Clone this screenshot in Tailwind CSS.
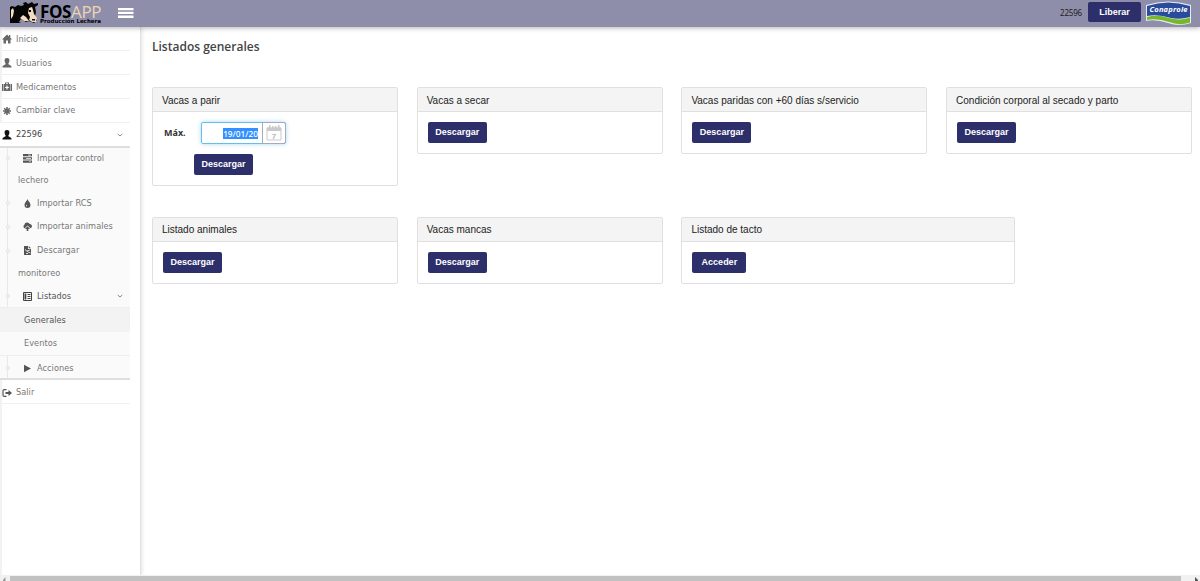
<!DOCTYPE html>
<html lang="es">
<head>
  <meta charset="UTF-8" />
  <meta name="viewport" content="width=device-width, initial-scale=1" />
  <title>FOSAPP - Listados generales</title>
  <script src="https://cdn.jsdelivr.net/npm/@tailwindcss/browser@4"></script>
</head>
<body class="flex h-[581px] flex-col overflow-hidden bg-white font-['Liberation_Sans',sans-serif]">

  <!-- Barra superior -->
  <header class="relative z-10 flex h-[27px] shrink-0 items-start bg-[#8e8eaa] shadow-[0_1px_5px_rgba(0,0,0,0.3)]">
    <div class="flex w-[118px] pl-[10px]">
      <svg class="mt-[2px] h-[22px] w-[29px] shrink-0" viewBox="0 0 29 22">
        <path fill="#050505" d="M0 5 2 4 5 5 8 3 11 4 14 3 13 1 16 0 18 2 22 0 24 2 28 1 28 3 25 5 26 10 25 14 27 18 24 21 19 19 16 20 11 17 9 20 11 21 0 21z"/>
        <path fill="#f3dcc0" d="M1 8 3 6 4 9 3 14 1 17zM10 16 13 13 16 15 19 19 14 19zM19 6 22 5 23 8 24 12 27 16 26 20 22 20 19 18 20 15 18 11z"/>
        <path fill="#050505" d="M19 8h2v2h-2zM22 17h3v1.500h-3z"/>
      </svg>
      <div class="flex flex-col whitespace-nowrap pt-[5px] pl-[1px]">
        <span class="h-[13px] text-[17px] leading-[14px] tracking-[-0.4px] text-[#ecd3b4] font-['Open_Sans',sans-serif]"><b class="font-bold text-black">FOS</b>APP</span>
        <span class="text-[5.500px] leading-[6px] font-bold text-black font-['DejaVu_Sans',sans-serif]">Producción Lechera</span>
      </div>
    </div>
    <svg class="mt-[8px] h-[10px] w-[16px]" viewBox="0 0 16 10" fill="#fff"><path d="M0 0h15.500v2.300H0zM0 3.800h15.500v2.300H0zM0 7.600h15.500v2.300H0z"/></svg>
    <div class="ml-auto flex items-start pr-[8px]">
      <span class="mt-[7px] mr-[6px] text-[8px] leading-[11px] tracking-[-0.2px] text-[#222] font-['Noto_Sans',sans-serif]">22596</span>
      <button class="mt-[2px] mr-[4px] h-[20px] w-[53px] rounded-[2px] bg-[#2d2f6b] pt-px text-[9px] font-bold text-white">Liberar</button>
      <svg class="mt-[1px] h-[25px] w-[47px]" viewBox="0 0 47 25">
        <path fill="#e8edf2" d="M1 4Q23-3 46 4V22Q34 26 23 22 11 18 1 20z"/>
        <path fill="#2a4a9c" d="M2 5Q23-2 45 5V16Q35 19 26 17 13 13 2 15z"/>
        <path fill="#76b82a" d="M2 16Q13 13 24 17 35 20 45 16.500V21.500Q34 25 24 21 12 17 2 19z"/>
        <text x="23.500" y="11.300" text-anchor="middle" textLength="38" fill="#fff" font-family="Open Sans, sans-serif" font-size="7.500" font-weight="700" font-style="italic">Conaprole</text>
      </svg>
    </div>
  </header>

  <div class="flex min-h-0 flex-1">
    <!-- Menú lateral -->
    <nav class="w-[141px] shrink-0 border-r border-[#e3e3e3] text-[8.200px] text-[#777] shadow-[1px_0_4px_rgba(0,0,0,0.12)] font-['DejaVu_Sans',sans-serif] tracking-[0.040px]">
      <div class="border-l-2 border-[#f2f2f2]">
        <a class="flex h-[24px] w-[128px] items-center border-b border-[#f0f0f0] pt-[1px]">
          <svg class="mr-[4px] h-[10px] w-[10px]" viewBox="0 0 10 10" fill="#666"><path d="M5 .5 0 5.500h1.500V9.500H4V6.500h2v3h2.500v-4H10L8.300 3.800V1H7v1.500z"/></svg>Inicio
        </a>
        <a class="flex h-[24px] w-[128px] items-center border-b border-[#f0f0f0] pt-[1px]">
          <svg class="mr-[4px] h-[10px] w-[10px]" viewBox="0 0 10 10" fill="#666"><path d="M5 0c2 0 2.600 1.300 2.400 3C7.200 4.500 6.500 5 6.300 6c.2 1 3.200 1 3.200 3v.5H.5V9c0-2 3-2 3.200-3-.2-1-.9-1.500-1.100-3C2.400 1.300 3 0 5 0z"/></svg>Usuarios
        </a>
        <a class="flex h-[24px] w-[128px] items-center border-b border-[#f0f0f0] pt-[1px]">
          <svg class="mr-[4px] h-[10px] w-[10px]" viewBox="0 0 10 10" fill="#666"><path fill-rule="evenodd" d="M0 2h1.200v7H0zM8.800 2H10v7H8.800zM1.700 2H3V.500h4V2h1.300v7H1.700zM4 2h2v-.7H4zM4.400 3.600v1.300H3.100v1.200h1.300v1.300h1.200V6.100h1.300V4.900H5.600V3.600z"/></svg>Medicamentos
        </a>
        <a class="flex h-[24px] w-[128px] items-center border-b border-[#f0f0f0]">
          <svg class="mr-[4px] h-[10px] w-[10px]" viewBox="0 0 10 10" stroke="#666" stroke-width="1.600"><path d="M5 1v8M1 5h8M2.200 2.200l5.600 5.600M7.800 2.200 2.200 7.800"/></svg>Cambiar clave
        </a>
      </div>
      <a class="flex h-[25px] w-[130px] items-center border-b-2 border-[#dedede] pl-[2px] text-[#444]">
        <svg class="mr-[4px] h-[10px] w-[10px]" viewBox="0 0 10 10" fill="#111"><path d="M5 0c2 0 2.600 1.300 2.400 3C7.200 4.500 6.500 5 6.300 6c.2 1 3.200 1 3.200 3v.5H.5V9c0-2 3-2 3.200-3-.2-1-.9-1.500-1.100-3C2.400 1.300 3 0 5 0z"/></svg>22596
        <svg class="mr-[7px] ml-auto h-[6px] w-[6px]" viewBox="0 0 6 6" fill="none" stroke="#888"><path d="m.7 2 2.300 2L5.300 2"/></svg>
      </a>

      <div class="w-[130px] border-b-2 border-[#dedede] bg-[#fafafa]">
        <div class="ml-[7px] border-l border-[#e9e9e9]">
          <a class="flex h-[44px] flex-col">
            <span class="flex h-[20px] items-center">
              <i class="-ml-[2px] mr-[13px] size-[4px] rounded-full border border-[#e0e0e0] bg-white"></i>
              <svg class="mr-[5px] h-[9px] w-[9px]" viewBox="0 0 9 9" fill="#555"><path fill-rule="evenodd" d="M0 0h9v2.200H0zM5 .8v.6h3V.8zM0 3.300h9v2.200H0zM3 4.100v.6h5v-.6zM0 6.600h9v2.200H0zM6 7.400V8h2v-.6z"/></svg>Importar control
            </span>
            <span class="flex h-[24px] items-center pl-[10px]">lechero</span>
          </a>
          <a class="flex h-[22px] items-center">
            <i class="-ml-[2px] mr-[13px] size-[4px] rounded-full border border-[#e0e0e0] bg-white"></i>
            <svg class="mr-[5px] h-[9px] w-[9px]" viewBox="0 0 9 9" fill="#555"><path fill-rule="evenodd" d="M4.500 0C5 2 7.500 3.600 7.500 6a3 3 0 0 1-6 0C1.500 3.600 4 2 4.500 0zM3.400 5.500c-.8 1-.4 2 .7 2z"/></svg>Importar RCS
          </a>
          <a class="flex h-[25px] items-center">
            <i class="-ml-[2px] mr-[13px] size-[4px] rounded-full border border-[#e0e0e0] bg-white"></i>
            <svg class="mr-[5px] h-[9px] w-[9px]" viewBox="0 0 9 9" fill="#555"><path d="M1.800 6.300A1.900 1.900 0 0 1 1.300 2.900 2.900 2.900 0 0 1 6.700 2 2.200 2.200 0 0 1 7.400 6.300L4.500 3.500zM4.500 4.300 7 6.900H5.300V9H3.700V6.900H2z"/></svg>Importar animales
          </a>
          <a class="flex h-[46px] flex-col">
            <span class="flex h-[23px] items-center">
              <i class="-ml-[2px] mr-[13px] size-[4px] rounded-full border border-[#e0e0e0] bg-white"></i>
              <svg class="mr-[5px] h-[9px] w-[9px]" viewBox="0 0 9 9"><path fill="#555" d="M1 0h4v3h3v6H1zM5.700 0 8 2.300H5.700z"/><path fill="none" stroke="#fafafa" stroke-width=".8" d="M2 3.500 5 6l2.500 1M3 7.500h2M4 5l3-1"/></svg>Descargar
            </span>
            <span class="flex h-[23px] items-center pl-[10px]">monitoreo</span>
          </a>
          <a class="flex h-[22px] items-center text-[#555]">
            <i class="-ml-[2px] mr-[13px] size-[4px] rounded-full border border-[#e0e0e0] bg-white"></i>
            <svg class="mr-[5px] h-[9px] w-[9px]" viewBox="0 0 9 9"><path fill="none" stroke="#444" d="M.5.500h8v8h-8z"/><path fill="#444" d="M1.500 1.500h1.800v6H1.500zM4.500 2h3v1h-3zM4.500 4h3v1h-3zM4.500 6h3v1h-3z"/></svg>Listados
            <svg class="mr-[7px] ml-auto h-[6px] w-[6px]" viewBox="0 0 6 6" fill="none" stroke="#888"><path d="m.7 2 2.300 2L5.300 2"/></svg>
          </a>
        </div>
        <a class="flex h-[25px] items-center border-t border-[#eee] bg-[#f3f3f3] pl-[24px] text-[#555]">Generales</a>
        <a class="flex h-[24px] items-center border-b border-[#eee] pl-[24px]">Eventos</a>
        <a class="ml-[7px] flex h-[22px] items-center border-l border-[#e9e9e9] pt-[2px]">
          <i class="-ml-[2px] mr-[13px] size-[4px] rounded-full border border-[#e0e0e0] bg-white"></i>
          <svg class="mr-[5px] h-[9px] w-[9px]" viewBox="0 0 9 9" fill="#555"><path d="M1 .8 8 4.500 1 8.200z"/></svg>Acciones
        </a>
      </div>

      <div class="h-[195px] border-l-2 border-[#f2f2f2]">
        <a class="flex h-[24px] w-[128px] items-center border-b border-[#f0f0f0] pt-[2px]">
          <svg class="mr-[4px] h-[10px] w-[10px]" viewBox="0 0 10 10"><path fill="none" stroke="#555" stroke-width="1.200" d="M4.500 1.600H2.200Q1 1.600 1 3v4q0 1.400 1.200 1.400h2.300"/><path fill="#555" d="M3.500 4h3V2L10 5 6.500 8V6h-3z"/></svg>Salir
        </a>
      </div>
    </nav>

    <!-- Contenido -->
    <main class="flex-1 pl-[11px]">
      <h1 class="mt-[12px] text-[12px] leading-[16px] font-semibold text-[#444] font-['Open_Sans',sans-serif]">Listados generales</h1>

      <div class="mt-[32px] grid grid-cols-[246px_246px_246px_246px] items-start gap-x-[18.700px] text-[10px] text-[#222]">
        <section class="h-[99px] rounded-[2px] border border-[#e0e0e0]">
          <h2 class="flex h-[24px] items-center border-b border-[#e0e0e0] bg-[#f4f4f4] pt-px pl-[9px]">Vacas a parir</h2>
          <div class="flex items-center pt-[10px] pl-[11px]">
            <label class="w-[37px] text-[9px] font-bold text-[#333] font-['Noto_Sans',sans-serif]">Máx.</label>
            <div class="flex h-[22px] w-[85px] rounded-[2px] border border-[#66bfe8] shadow-[0_0_4px_rgba(102,191,232,0.6)]">
              <div class="flex w-[60px] items-center justify-end pr-[4px]"><span class="bg-[#3390ff] text-[8.300px] leading-[11px] font-medium text-white font-['Noto_Sans',sans-serif]">19/01/20</span></div>
              <div class="-my-px -mr-px flex w-[24px] items-center justify-center rounded-r-[2px] border border-[#a9a9bd]">
                <svg class="h-[16px] w-[16px]" viewBox="0 0 16 16"><path fill="none" stroke="#c9c9c9" d="M1 3h14v12H1z"/><path fill="#c9c9c9" d="M1 2.500h14V6H1zM3 0h1.500v3H3zM6 1h1.500v2H6zM9 1h1.500v2H9zM12 0h1.500v3H12z"/><text x="8" y="13.500" text-anchor="middle" font-size="8" font-weight="700" fill="#b5b5b5" font-family="Liberation Sans, sans-serif">7</text></svg>
              </div>
            </div>
          </div>
          <button class="mt-[10px] ml-[41px] block h-[21px] w-[59px] rounded-[2px] bg-[#2d2f6b] pt-px text-[9px] font-bold text-white">Descargar</button>
        </section>
        <section class="h-[67px] rounded-[2px] border border-[#e0e0e0]">
          <h2 class="flex h-[24px] items-center border-b border-[#e0e0e0] bg-[#f4f4f4] pt-px pl-[9px]">Vacas a secar</h2>
          <button class="mt-[10px] ml-[10px] block h-[21px] w-[59px] rounded-[2px] bg-[#2d2f6b] pt-px text-[9px] font-bold text-white">Descargar</button>
        </section>
        <section class="h-[67px] rounded-[2px] border border-[#e0e0e0]">
          <h2 class="flex h-[24px] items-center border-b border-[#e0e0e0] bg-[#f4f4f4] pt-px pl-[9px]">Vacas paridas con +60 días s/servicio</h2>
          <button class="mt-[10px] ml-[10px] block h-[21px] w-[59px] rounded-[2px] bg-[#2d2f6b] pt-px text-[9px] font-bold text-white">Descargar</button>
        </section>
        <section class="h-[67px] rounded-[2px] border border-[#e0e0e0]">
          <h2 class="flex h-[24px] items-center border-b border-[#e0e0e0] bg-[#f4f4f4] pt-px pl-[9px]">Condición corporal al secado y parto</h2>
          <button class="mt-[10px] ml-[10px] block h-[21px] w-[59px] rounded-[2px] bg-[#2d2f6b] pt-px text-[9px] font-bold text-white">Descargar</button>
        </section>
      </div>

      <div class="mt-[31px] grid grid-cols-[246px_246px_334px] items-start gap-x-[18.700px] text-[10px] text-[#222]">
        <section class="h-[67px] rounded-[2px] border border-[#e0e0e0]">
          <h2 class="flex h-[24px] items-center border-b border-[#e0e0e0] bg-[#f4f4f4] pl-[9px]">Listado animales</h2>
          <button class="mt-[10px] ml-[10px] block h-[21px] w-[59px] rounded-[2px] bg-[#2d2f6b] text-[9px] font-bold text-white">Descargar</button>
        </section>
        <section class="h-[67px] rounded-[2px] border border-[#e0e0e0]">
          <h2 class="flex h-[24px] items-center border-b border-[#e0e0e0] bg-[#f4f4f4] pl-[9px]">Vacas mancas</h2>
          <button class="mt-[10px] ml-[10px] block h-[21px] w-[59px] rounded-[2px] bg-[#2d2f6b] text-[9px] font-bold text-white">Descargar</button>
        </section>
        <section class="h-[67px] rounded-[2px] border border-[#e0e0e0]">
          <h2 class="flex h-[24px] items-center border-b border-[#e0e0e0] bg-[#f4f4f4] pl-[9px]">Listado de tacto</h2>
          <button class="mt-[10px] ml-[10px] block h-[21px] w-[54px] rounded-[2px] bg-[#2d2f6b] text-[9px] font-bold text-white">Acceder</button>
        </section>
      </div>
    </main>
  </div>

  <!-- Barra de desplazamiento -->
  <div class="flex h-[6px] shrink-0 items-end justify-between bg-[#f1f1f1]">
    <svg class="h-[4px] w-[10px]" viewBox="0 0 10 4" fill="#999"><path d="M3 3 5.500 0v4H3z"/></svg>
    <div class="h-[5px] w-[1171px] bg-[#c1c1c1]"></div>
    <svg class="h-[4px] w-[19px]" viewBox="0 0 19 4" fill="#555"><path d="M14 0l3 3v1h-3z"/></svg>
  </div>
</body>
</html>
